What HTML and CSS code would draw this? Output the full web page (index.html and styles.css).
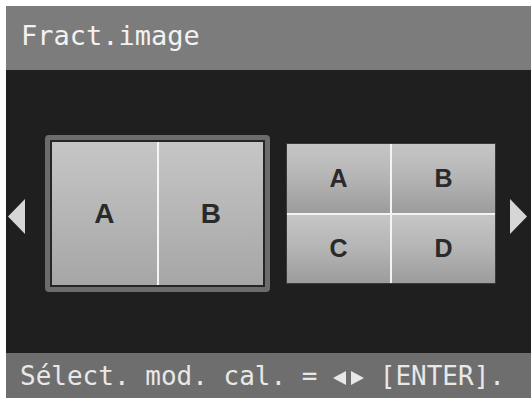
FILE: index.html
```html
<!DOCTYPE html>
<html lang="fr">
<head>
<meta charset="utf-8">
<title>Fract.image</title>
<link rel="stylesheet" href="styles.css">
</head>
<body>
<div class="page">
  <div class="screen">
    <header class="titlebar">Fract.image</header>
    <main class="stage">
      <svg class="nav-arrow" width="17" height="35" viewBox="0 0 17 35" aria-hidden="true"><polygon points="17,0 17,35 0,17.5" /></svg>
      <div class="frame">
        <div class="split split-two">
          <div class="cell">A</div>
          <div class="cell">B</div>
        </div>
      </div>
      <div class="split split-four">
        <div class="cell">A</div>
        <div class="cell">B</div>
        <div class="cell">C</div>
        <div class="cell">D</div>
      </div>
      <svg class="nav-arrow" width="17" height="35" viewBox="0 0 17 35" aria-hidden="true"><polygon points="0,0 0,35 17,17.5" /></svg>
    </main>
    <footer class="hint">Sélect. mod. cal. = <svg class="hint-arrows" width="31" height="16" viewBox="0 0 31 16" aria-hidden="true"><polygon points="13,1 13,15 0,8" /><polygon points="18,1 18,15 31,8" /></svg> [ENTER].</footer>
  </div>
</div>
</body>
</html>
```
FILE: styles.css
```css
* { box-sizing: border-box; }

html, body {
  margin: 0;
  padding: 0;
  background: #ffffff;
}

.page {
  width: 531px;
  height: 401px;
  padding: 6px 0 3px 6px;
}

.screen {
  width: 525px;
  height: 392px;
  display: flex;
  flex-direction: column;
  background: #1f1f1f;
}

.titlebar {
  height: 64px;
  flex: none;
  background: #7c7c7c;
  color: #f2f2f2;
  font-family: "DejaVu Sans Mono", "Liberation Mono", monospace;
  font-size: 27px;
  line-height: 32px;
  padding: 14px 0 0 15px;
  white-space: nowrap;
}

.stage {
  flex: 1;
  display: flex;
  align-items: center;
  padding: 4px 0 0 2px;
}

.nav-arrow {
  flex: none;
  fill: #d6d6d6;
  margin-top: 6px;
}

.frame {
  flex: none;
  margin-left: 20px;
  width: 225px;
  height: 157px;
  border: 5px solid #6c6c6c;
  border-radius: 4px;
  background: #262626;
  padding: 2px;
}

.split {
  display: grid;
  gap: 2px;
  background: #f4f4f4;
  font-family: "Liberation Sans", Arial, sans-serif;
  font-weight: bold;
  color: #2a2a2a;
}

.split-two {
  width: 100%;
  height: 100%;
  grid-template-columns: 1fr 1fr;
  font-size: 28px;
}

.split-two .cell {
  background: linear-gradient(#c6c6c6, #a6a6a6);
}

.split-four {
  flex: none;
  margin: 0 14px 0 16px;
  width: 210px;
  height: 141px;
  grid-template-columns: 1fr 1fr;
  grid-template-rows: 1fr 1fr;
  font-size: 25px;
  border: 1px solid #3a3a3a;
}

.split-four .cell {
  background: linear-gradient(#c6c6c6 0%, #b4b4b4 50%, #9c9c9c 100%);
}

.cell {
  display: flex;
  align-items: center;
  justify-content: center;
}

.hint {
  height: 45px;
  flex: none;
  background: #6e6e6e;
  color: #e8e8e8;
  font-family: "DejaVu Sans Mono", "Liberation Mono", monospace;
  font-size: 26px;
  line-height: 32px;
  padding: 7px 0 0 14px;
  white-space: nowrap;
}

.hint-arrows {
  fill: #e8e8e8;
  vertical-align: -1px;
}
```
